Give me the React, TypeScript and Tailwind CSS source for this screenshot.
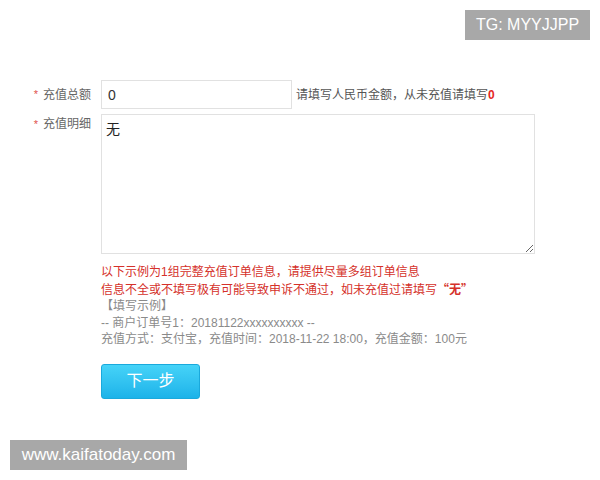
export default function App() {
  return (
    <div
      className="relative w-[600px] h-[480px] bg-white overflow-hidden"
      style={{ fontFamily: '"Liberation Sans", "Noto Sans CJK SC", sans-serif' }}
    >
      {/* watermark badges */}
      <div className="absolute top-[10px] right-[10px] w-[125px] h-[30px] bg-[#a8a8a8] text-white text-[16px] flex items-center justify-center">
        TG: MYYJJPP
      </div>
      <div className="absolute left-[10px] top-[440px] w-[177px] h-[30px] bg-[#a8a8a8] text-white text-[17px] flex items-center justify-center">
        www.kaifatoday.com
      </div>

      <div className="pt-[80px]">
        {/* amount */}
        <div className="flex items-center">
          <label className="w-[101px] pr-[10px] flex justify-end items-center gap-[5px] text-[12px] text-[#666]">
            <span className="text-[#e0524a] text-[11px] leading-none">*</span>
            <span>充值总额</span>
          </label>
          <input
            readOnly
            defaultValue="0"
            className="w-[191px] h-[29px] border border-[#e1e1e1] px-[6px] text-[14px] text-[#333] outline-none"
          />
          <span className="ml-[4px] text-[12px] text-[#555]">
            请填写人民币金额，从未充值请填写<b className="text-[#e5281e]">0</b>
          </span>
        </div>

        {/* detail */}
        <div className="flex items-start mt-[5px]">
          <label className="w-[101px] pr-[10px] pt-[1px] flex justify-end items-center gap-[5px] text-[12px] text-[#666]">
            <span className="text-[#e0524a] text-[11px] leading-none">*</span>
            <span>充值明细</span>
          </label>
          <textarea
            readOnly
            defaultValue="无"
            className="w-[434px] h-[140px] border border-[#e1e1e1] px-[4px] py-[4px] text-[14px] text-[#222] outline-none"
          />
        </div>

        {/* notes */}
        <div className="ml-[101px] mt-[10px] text-[12px] leading-[16.5px]">
          <p className="text-[#d5312a]">以下示例为1组完整充值订单信息，请提供尽量多组订单信息</p>
          <p className="text-[#d5312a]">
            信息不全或不填写极有可能导致申诉不通过，如未充值过请填写
            <b className="font-['Noto_Sans_CJK_SC',sans-serif]">“无”</b>
          </p>
          <p className="text-[#8a8a8a]">【填写示例】</p>
          <p className="text-[#8a8a8a]">-- 商户订单号1：20181122xxxxxxxxxx --</p>
          <p className="text-[#8a8a8a]">充值方式：支付宝，充值时间：2018-11-22 18:00，充值金额：100元</p>

          <button className="mt-[16px] w-[99px] h-[35px] rounded-[3px] border border-[#1aa9dc] bg-gradient-to-b from-[#45d3f8] to-[#1bb3e9] text-white text-[16px]">
            下一步
          </button>
        </div>
      </div>
    </div>
  );
}
